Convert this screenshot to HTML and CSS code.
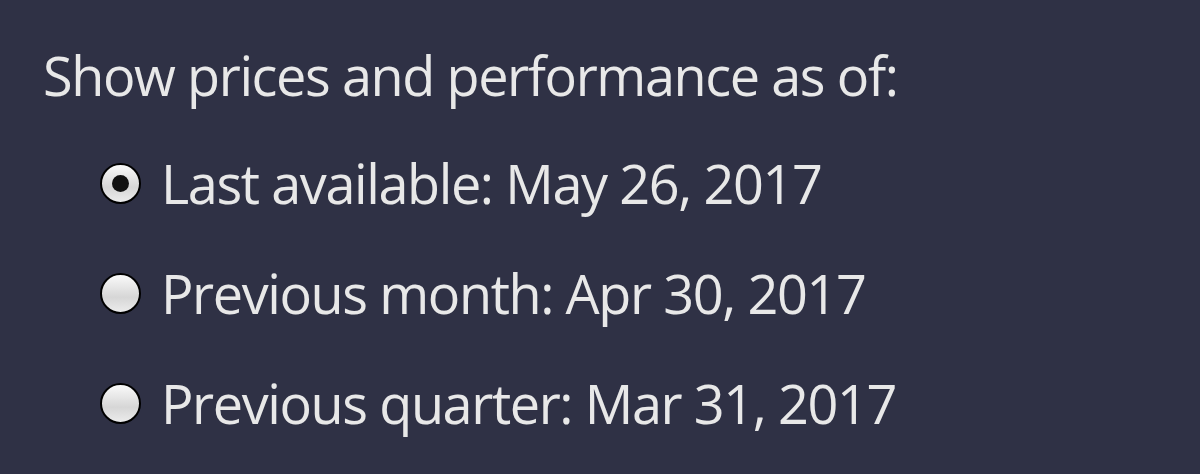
FILE: index.html
```html
<!DOCTYPE html>
<html lang="en">
<head>
    <meta charset="UTF-8">
    <title>Display date</title>
    <link rel="stylesheet" href="styles.css">
</head>
<body>
    <div class="panel">
        <p class="prompt">Show prices and performance as of:</p>
        <div class="choices">
            <label class="choice">
                <input type="radio" name="asof" value="last" checked>
                <span class="dot"></span>
                Last available: May 26, 2017
            </label>
            <label class="choice">
                <input type="radio" name="asof" value="month">
                <span class="dot"></span>
                Previous month: Apr 30, 2017
            </label>
            <label class="choice">
                <input type="radio" name="asof" value="quarter">
                <span class="dot"></span>
                Previous quarter: Mar 31, 2017
            </label>
        </div>
    </div>
</body>
</html>
```

FILE: styles.css
```css
body {
    margin: 0;
    background-color: #2f3145;
    color: #e8e8e8;
    font-family: "Open Sans", sans-serif;
}
.panel {
    padding: 39px 0 0 43px;
}
.prompt {
    margin: 0;
    font-size: 54px;
    line-height: 72px;
    letter-spacing: -1.4px;
}
.choices {
    display: flex;
    flex-direction: column;
    padding-left: 57px;
    margin-top: 17px;
}
.choice {
    display: flex;
    align-items: center;
    gap: 20px;
    height: 110px;
    font-size: 54px;
    letter-spacing: -1.4px;
    cursor: pointer;
}
.choice input {
    display: none;
}
.dot {
    position: relative;
    width: 37px;
    height: 37px;
    border: 2.5px solid #000;
    border-radius: 50%;
    background: linear-gradient(#fafafa, #d6d6d6 60%, #ececec);
    flex-shrink: 0;
}
.choice input:checked + .dot::after {
    content: "";
    position: absolute;
    left: 10px;
    top: 10px;
    width: 17px;
    height: 17px;
    border-radius: 50%;
    background: #111;
}
```
